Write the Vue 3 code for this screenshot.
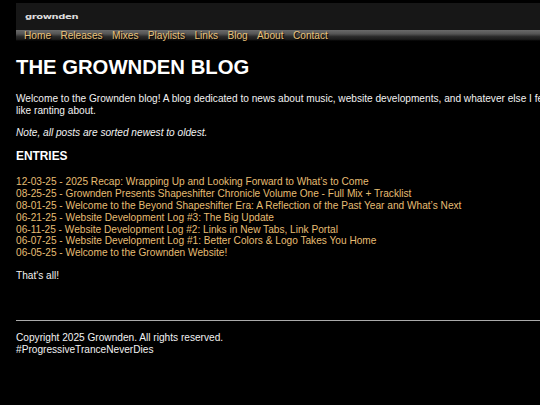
<script setup>
const navLinks = ['Home', 'Releases', 'Mixes', 'Playlists', 'Links', 'Blog', 'About', 'Contact']

const entries = [
  '12-03-25 - 2025 Recap: Wrapping Up and Looking Forward to What’s to Come',
  '08-25-25 - Grownden Presents Shapeshifter Chronicle Volume One - Full Mix + Tracklist',
  '08-01-25 - Welcome to the Beyond Shapeshifter Era: A Reflection of the Past Year and What’s Next',
  '06-21-25 - Website Development Log #3: The Big Update',
  '06-11-25 - Website Development Log #2: Links in New Tabs, Link Portal',
  '06-07-25 - Website Development Log #1: Better Colors & Logo Takes You Home',
  '06-05-25 - Welcome to the Grownden Website!',
]
</script>

<template>
  <div class="page">
    <header class="site-header">
      <div class="logo-bar">
        <span class="logo">grownden</span>
      </div>
      <nav class="nav">
        <a v-for="link in navLinks" :key="link" href="#">{{ link }}</a>
      </nav>
    </header>

    <main class="content">
      <h1>THE GROWNDEN BLOG</h1>
      <p class="intro">
        Welcome to the Grownden blog! A blog dedicated to news about music, website developments, and whatever else I feel
        like ranting about.
      </p>
      <p class="note">Note, all posts are sorted newest to oldest.</p>
      <h2>ENTRIES</h2>
      <ul class="entries">
        <li v-for="entry in entries" :key="entry"><a href="#">{{ entry }}</a></li>
      </ul>
      <p class="outro">That's all!</p>
    </main>

    <footer class="footer">
      <p>Copyright 2025 Grownden. All rights reserved.</p>
      <p>#ProgressiveTranceNeverDies</p>
    </footer>
  </div>
</template>

<style>
html,
body {
  margin: 0;
  background: #000;
  overflow: hidden;
}
</style>

<style scoped>
.page {
  width: 540px;
  padding: 3px 0 0 16px;
  font-family: "Liberation Sans", Arial, sans-serif;
  font-size: 10.13px;
  line-height: 11.8px;
  color: #f2f2f2;
}

.logo-bar {
  display: flex;
  align-items: center;
  height: 27px;
  padding-left: 9px;
  background: #171717;
}

.logo {
  display: inline-block;
  font-family: "DejaVu Sans", sans-serif;
  font-size: 10px;
  font-weight: 700;
  letter-spacing: -0.4px;
  line-height: 10px;
  color: #ddd;
  transform: scaleY(0.75);
}

.nav {
  display: flex;
  gap: 9.4px;
  height: 11px;
  padding-left: 8px;
  line-height: 11px;
  background: linear-gradient(#6a6a6a 0, #555 35%, #2a2a2a 60%, #1c1c1c 85%, #000 100%);
}

.nav a {
  color: #e9c27a;
  text-decoration: none;
  text-shadow: 1px 1px 1px #000;
}

h1 {
  margin: 14px 0 0;
  color: #fff;
  font-size: 20.3px;
  line-height: 24px;
}

p {
  margin: 0;
}

.intro {
  margin-top: 14px;
}

.note {
  margin-top: 10px;
  font-style: italic;
}

h2 {
  margin: 11px 0 0;
  color: #fff;
  font-size: 11.9px;
  line-height: 14px;
}

.entries {
  margin: 13px 0 0;
  padding: 0;
  list-style: none;
}

.entries a {
  color: #e6bd73;
  text-decoration: none;
}

.outro {
  margin-top: 11px;
}

.footer {
  margin-top: 38px;
  padding-top: 11px;
  border-top: 1px solid #aaa;
}
</style>
